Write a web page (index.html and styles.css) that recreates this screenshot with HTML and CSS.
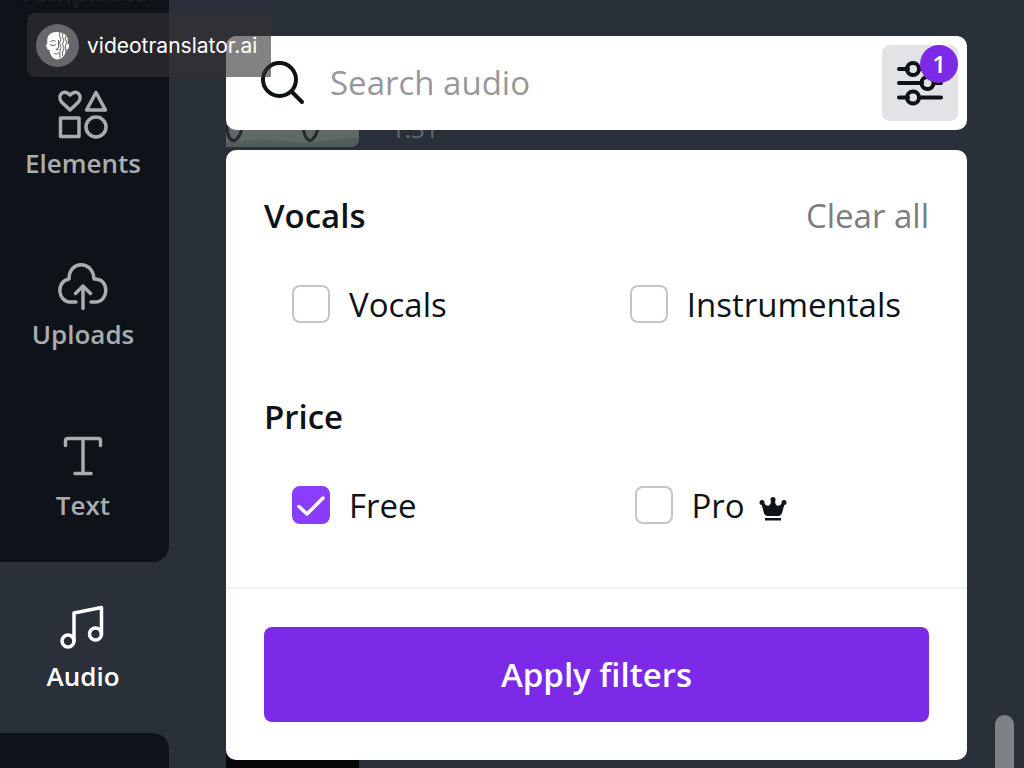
FILE: index.html
```html
<!DOCTYPE html>
<html lang="en">
<head>
<meta charset="utf-8">
<meta name="viewport" content="width=device-width, initial-scale=1">
<title>Audio</title>
<link rel="stylesheet" href="styles.css">
</head>
<body>
<div class="app">
  <nav class="sidebar">
    <a class="tab tab-hidden" href="#"><span class="icon"></span>Templates</a>
    <a class="tab" href="#">
      <svg class="icon" viewBox="0 0 50 50"><path d="M12 20 L3.500 12 C-1 6 5 -2 12 5 C19 -2 25 6 20.500 12 Z M38 2.500 L28.500 20 H47.500 Z M2.500 28 H21 V46.500 H2.500 Z"/><circle cx="38" cy="37" r="10"/></svg>
      Elements</a>
    <a class="tab" href="#">
      <svg class="icon" viewBox="0 0 50 50"><path d="M18 41 H13 C-1 41 -2 20 11 18 C11 -1 35 -1 36 18 C52 17 51 41 37.500 41 H33 M25 47.500 V26 M17.500 32.500 L25 25 L32.500 32.500"/></svg>
      Uploads</a>
    <a class="tab tab-before" href="#">
      <svg class="icon" viewBox="0 0 50 50"><path d="M7.500 13.500 V9 Q7.500 6.500 10 6.500 H40 Q42.500 6.500 42.500 9 V13.500 M25 6.500 V41.500 M17 41.500 H33"/></svg>
      Text</a>
    <a class="tab tab-active" href="#" aria-current="page">
      <svg class="icon" viewBox="0 0 50 50"><circle cx="10" cy="38" r="6"/><circle cx="37.500" cy="31" r="6"/><path d="M16 38 V10 L43.500 4.500 V31"/></svg>
      Audio</a>
    <div class="tab-after"></div>
  </nav>

  <main class="main">
    <div class="results">
      <svg class="thumb" viewBox="0 0 133 18" preserveAspectRatio="none">
        <rect width="133" height="18" fill="#5e6867"/>
        <path d="M0 14 L35 11 L80 14 L133 9 V18 H0 Z" fill="#535d5c"/>
        <path d="M1 0 Q2 12 8 12 Q14 10 16 0 M77 0 Q79 11 84 12 Q90 10 92 0" fill="none" stroke="#25292e" stroke-width="3"/>
      </svg>
      <span class="duration">1:31</span>
      <div class="next-thumb"></div>
    </div>

    <div class="search">
      <svg class="search-icon" viewBox="0 0 48 48"><circle cx="19.500" cy="20.500" r="16.500"/><path d="M31.500 32.500 L42 43"/></svg>
      <input class="search-input" type="search" placeholder="Search audio" aria-label="Search audio">
      <button class="filter-button" type="button" aria-label="Filters, 1 applied">
        <svg class="filter-icon" viewBox="0 0 48 48"><path d="M3 10 H12 M24 10 H45 M3 24 H26 M38 24 H45 M3 38.500 H12 M24 38.500 H45"/><circle cx="17" cy="10" r="6"/><circle cx="31.500" cy="24" r="6"/><circle cx="17" cy="38.500" r="6"/></svg>
        <span class="badge">1</span>
      </button>
    </div>

    <form class="panel">
      <div class="filters">
        <section class="group">
          <div class="group-head"><h2>Vocals</h2><button class="clear" type="reset">Clear all</button></div>
          <div class="options">
            <label class="option"><input type="checkbox"><span class="name">Vocals</span></label>
            <label class="option"><input type="checkbox"><span class="name">Instrumentals</span></label>
          </div>
        </section>
        <section class="group">
          <div class="group-head"><h2>Price</h2></div>
          <div class="options">
            <label class="option"><input type="checkbox" checked><span class="name">Free</span></label>
            <label class="option"><input type="checkbox"><span class="name">Pro
              <svg class="crown" viewBox="0 0 28 26"><path d="M2 7 L4 6 Q7 10.500 10 9.500 Q12 8.500 12 4 H16 Q16 8.500 18 9.500 Q21 10.500 24 6 L26 7 Q24.500 11 23.500 15.500 Q22.500 20 19 20 H9 Q5.500 20 4.500 15.500 Q3.500 11 2 7 Z M6 22 H22 V24.500 H6 Z"/><circle cx="3" cy="6.500" r="2.500"/><circle cx="14" cy="3.500" r="2.500"/><circle cx="25" cy="6.500" r="2.500"/></svg></span></label>
          </div>
        </section>
      </div>
      <div class="panel-footer"><button class="apply" type="button">Apply filters</button></div>
    </form>
    <div class="scroll-thumb"></div>
  </main>
</div>

<div class="watermark">
  <svg class="avatar" viewBox="0 0 43 43"><circle cx="21.500" cy="21.500" r="21.500" fill="#68676b"/>
    <path d="M21 8 C12 8 10.500 14 11.500 20 Q9.500 19 10.500 23 Q11 26 13.500 26 C14 32 18 35.500 21 35.500 C26 35 29 32 30 26 Q32.500 26 33 22 Q33.500 19 31.500 20 C33 13 30 8 21 8 Z" fill="#fff"/>
    <path d="M14 20.500 Q17 23 20 20.500 M14.500 17.500 Q17 16 19.500 17 M22.500 16 V24 L20 25.500 H22.500 M18 29.500 Q21 31 23 29 M24 8 Q22 12 25 15 Q22 19 25 23 Q23 27 24 34 M27 9 Q25 13 28 16 Q25 20 28 24 Q26 28 26.500 32 M30 11.500 Q28 15 31 18 Q28 22 30 27" fill="none" stroke="#68676b"/></svg>
  <span>videotranslator.ai</span>
</div>
</body>
</html>
```
FILE: styles.css
```css
* { box-sizing: border-box; }

body {
  margin: 0;
  background: #293039;
  color: #0e1318;
  font-family: "Open Sans", "Noto Sans", sans-serif;
  font-size: 33px;
  line-height: 48px;
}

button, input { font: inherit; color: inherit; }
button { border: 0; cursor: pointer; }

.app {
  display: grid;
  grid-template-columns: 169px 1fr;
  height: 100vh;
  overflow: hidden;
}

/* Sidebar, scrolled past its first tab */
.sidebar {
  display: flex;
  flex-direction: column;
  min-height: 0;
  margin-top: -122px;
}

.tab {
  display: flex;
  flex: none;
  flex-direction: column;
  align-items: center;
  gap: 6px;
  height: 171px;
  padding: 41px 3px 0 0;
  background: #0e131a;
  color: #a9adb0;
  font-size: 26px;
  font-weight: 600;
  line-height: 34px;
  text-decoration: none;
}

.icon {
  width: 50px;
  height: 50px;
  fill: none;
  stroke: currentColor;
  stroke-width: 3.5;
  stroke-linecap: round;
  stroke-linejoin: round;
}

.tab-hidden { color: #191e25; }
.tab-before { border-bottom-right-radius: 16px; }
.tab-active { background: none; color: #fff; }

.tab-after {
  flex: 1;
  background: #0e131a;
  border-top-right-radius: 16px;
}

.main {
  position: relative;
  display: flex;
  flex-direction: column;
  gap: 20px;
  padding: 36px 57px 8px;
}

/* Result list that shows through behind the search bar and the panel */
.results {
  position: absolute;
  inset: 110px 57px 0;
  display: grid;
  grid-template-columns: 133px 1fr;
  grid-template-rows: 1fr 20px;
  gap: 0 32px;
}

.thumb {
  width: 133px;
  height: 19px;
  margin-top: 18px;
  border-bottom-right-radius: 8px;
}

.duration {
  color: #666b71;
  font-size: 24px;
  line-height: 38px;
}

.next-thumb { background: #050708; }

.search {
  position: relative;
  display: flex;
  align-items: center;
  padding: 9px 9px 9px 34px;
  background: #fff;
  border-radius: 10px;
}

.search-icon {
  width: 48px;
  height: 48px;
  fill: none;
  stroke: #0e1318;
  stroke-width: 4;
  stroke-linecap: round;
}

.search-input {
  flex: 1;
  min-width: 0;
  height: 48px;
  margin-left: 22px;
  padding: 0;
  border: 0;
  outline: 0;
  background: none;
}

.search-input::placeholder { color: #96989b; opacity: 1; }

.filter-button {
  position: relative;
  display: grid;
  place-items: center;
  width: 76px;
  height: 76px;
  padding: 0;
  background: #e2e3e6;
  border-radius: 8px;
}

.filter-icon {
  width: 48px;
  height: 48px;
  fill: none;
  stroke: #0e1318;
  stroke-width: 4;
  stroke-linecap: round;
}

.badge {
  position: absolute;
  top: 0;
  right: 0;
  width: 38px;
  height: 38px;
  border-radius: 50%;
  background: #7d2ae8;
  color: #fff;
  font-size: 24px;
  font-weight: 600;
  line-height: 38px;
}

.panel {
  position: relative;
  display: flex;
  flex: 1;
  flex-direction: column;
  background: #fff;
  border-radius: 10px;
}

.filters {
  display: flex;
  flex: 1;
  flex-direction: column;
  gap: 64px;
  padding: 42px 38px 0;
}

.group {
  display: flex;
  flex-direction: column;
  gap: 39px;
}

.group-head {
  display: flex;
  justify-content: space-between;
}

h2 {
  margin: 0;
  font-size: 33px;
  font-weight: 600;
}

.clear {
  padding: 0;
  background: none;
  color: #7b7d80;
}

.options {
  display: grid;
  grid-template-columns: 1fr 1fr;
  gap: 76px;
  padding: 0 28px;
}

.option {
  display: flex;
  align-items: flex-start;
  gap: 19px;
}

.option input {
  flex: none;
  appearance: none;
  width: 38px;
  height: 38px;
  margin: 6px 0 4px;
  border: 2px solid #c3c5c8;
  border-radius: 8px;
}

.option input:checked {
  border-color: #8b3dff;
  background: #8b3dff url("data:image/svg+xml,%3Csvg xmlns='http://www.w3.org/2000/svg' viewBox='0 0 34 34' fill='none' stroke='white' stroke-width='3.5' stroke-linecap='round' stroke-linejoin='round'%3E%3Cpath d='M5 18.500 L13 26 L29 10'/%3E%3C/svg%3E");
}

.name {
  display: flex;
  align-items: center;
  gap: 14px;
  padding-top: 2px;
}

.crown {
  width: 28px;
  height: 26px;
  margin-top: 6px;
  fill: #0e1318;
}

.panel-footer {
  padding: 38px;
  border-top: 2px solid #f0f1f2;
}

.apply {
  display: block;
  width: 100%;
  min-height: 95px;
  border-radius: 8px;
  background: #7d2ae8;
  color: #fff;
  font-weight: 600;
}

.scroll-thumb {
  position: absolute;
  right: 10px;
  bottom: 0;
  width: 19px;
  height: 53px;
  border-radius: 10px 10px 0 0;
  background: #7e8287;
}

.watermark {
  position: absolute;
  top: 13px;
  left: 27px;
  display: flex;
  align-items: center;
  gap: 8px;
  padding: 11px 14px 10px 9px;
  border-radius: 8px 0 0 8px;
  background: rgba(53, 51, 50, 0.61);
  color: #fff;
  font-family: Inter, "Open Sans", sans-serif;
  font-size: 21px;
  line-height: 24px;
}

.avatar {
  width: 43px;
  height: 43px;
}
```
